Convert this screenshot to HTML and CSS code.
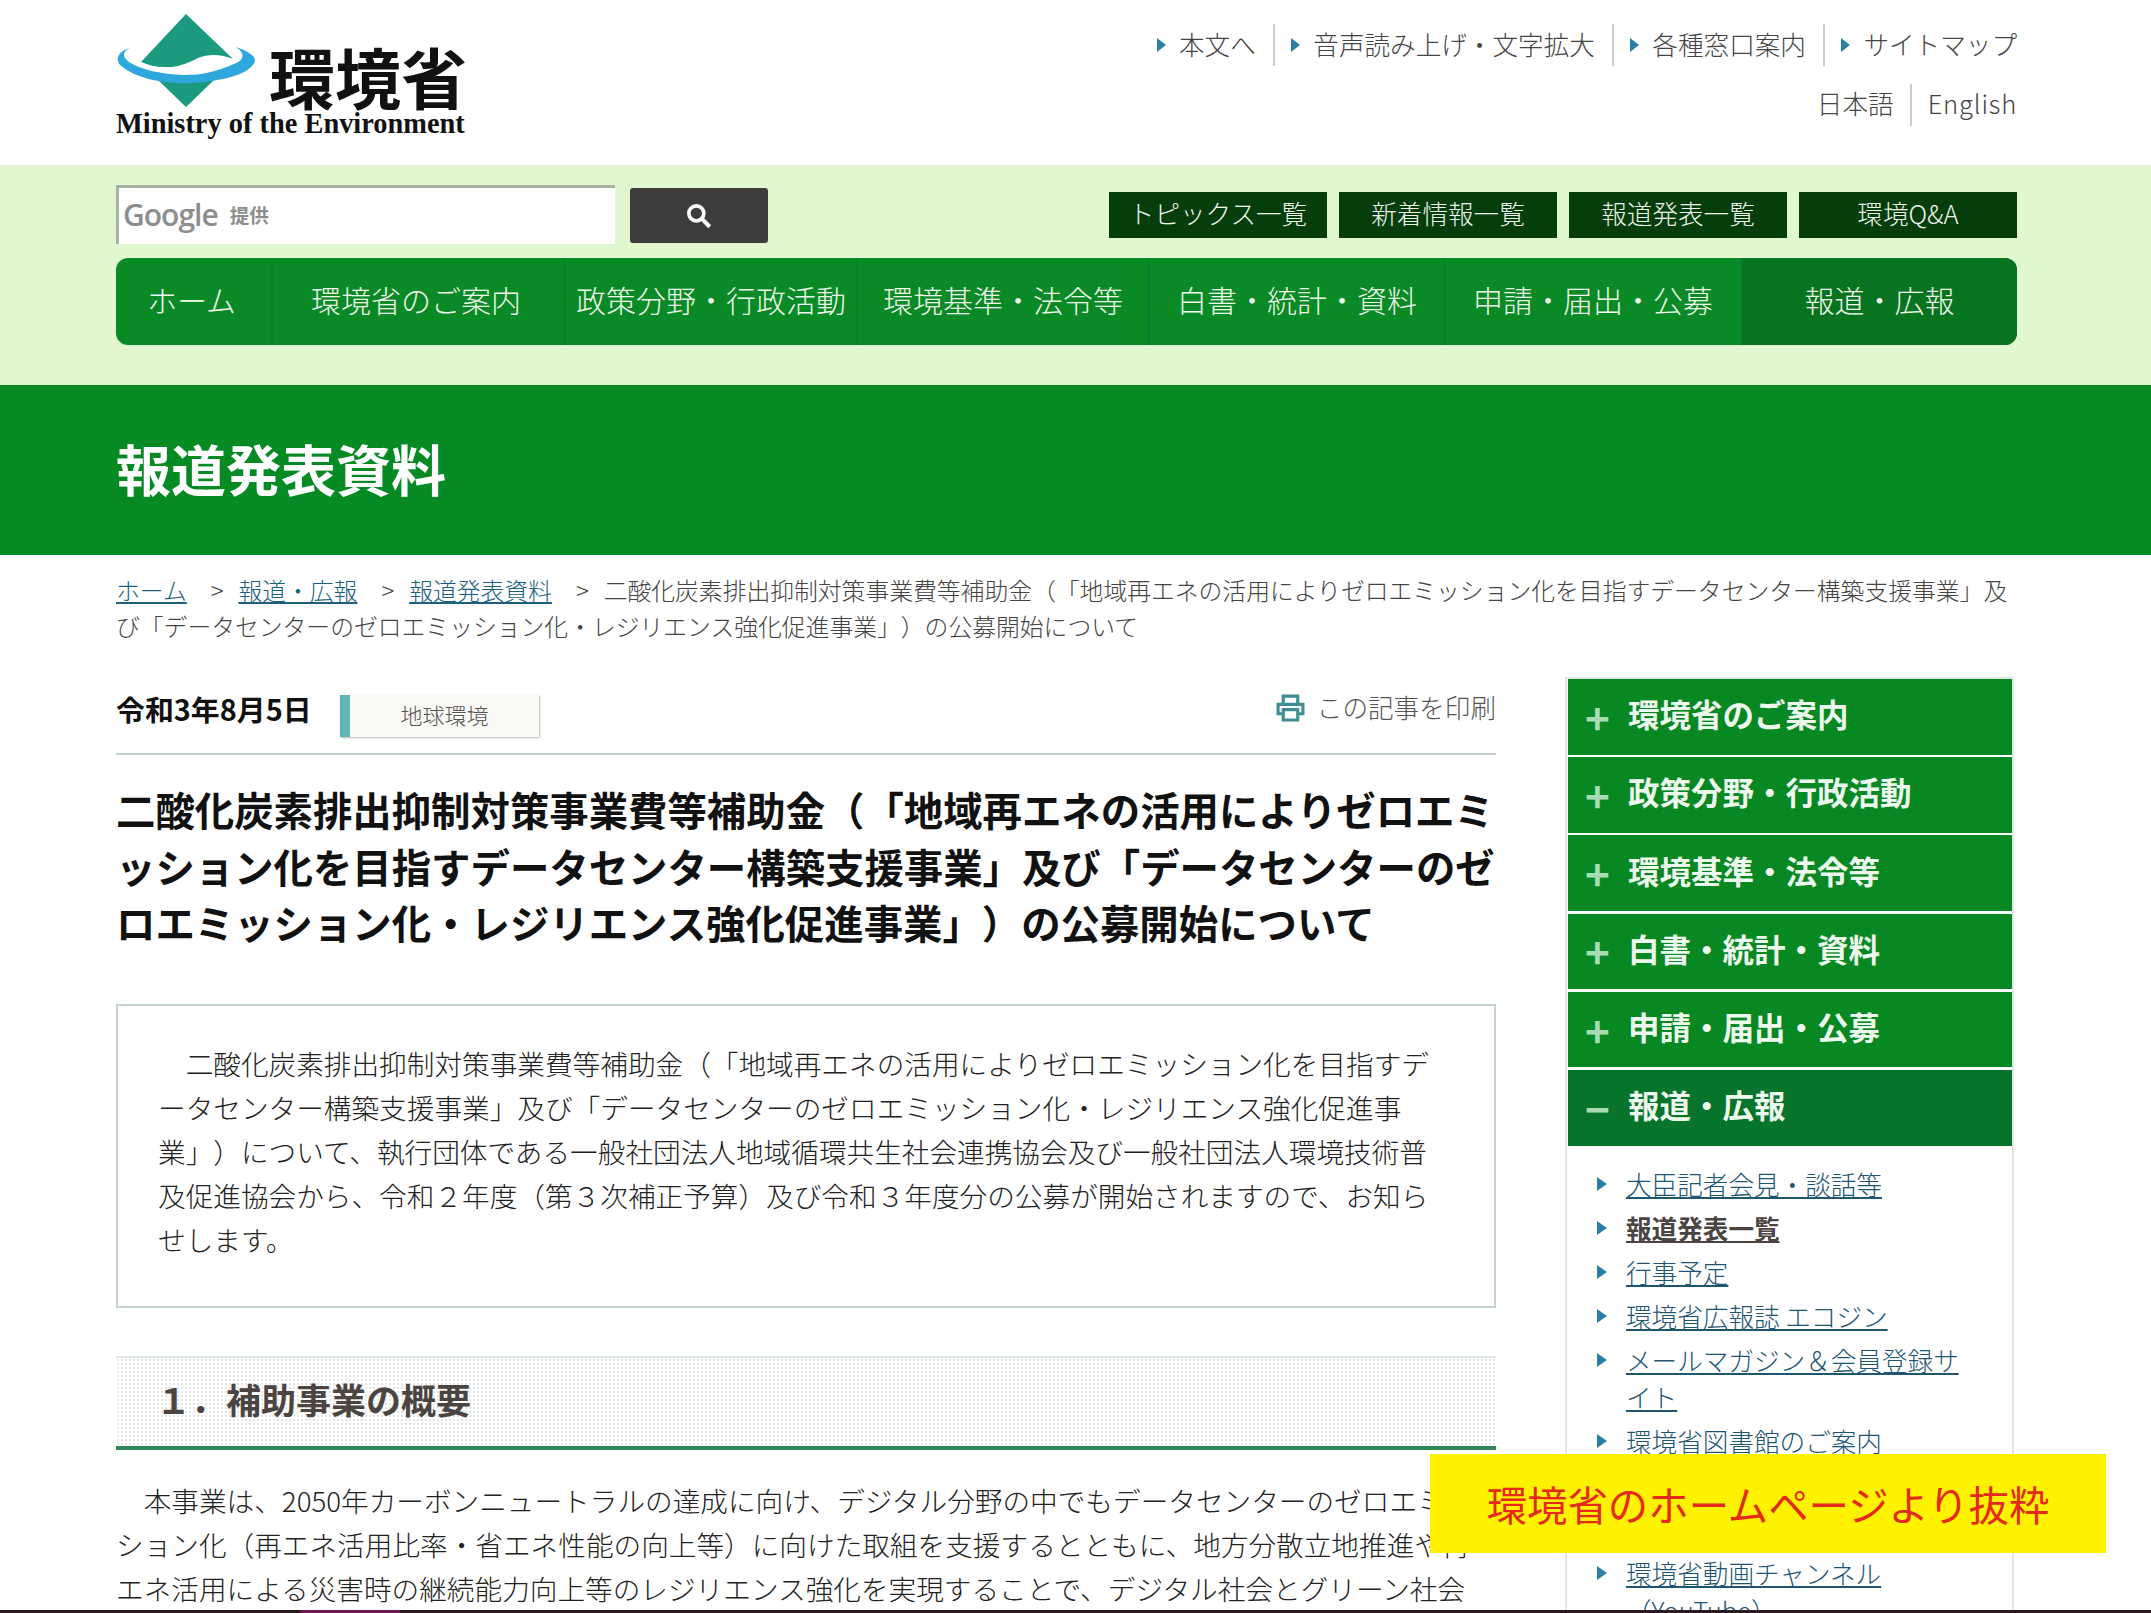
FILE: index.html
```html
<!DOCTYPE html>
<html lang="ja">
<head>
    <meta charset="UTF-8">
    <title>報道発表資料 | 環境省</title>
    <link rel="stylesheet" href="styles.css">
</head>
<body>
    <!-- ヘッダー -->
    <header class="site-head wrap">
        <div class="logo">
            <div class="logo-top">
                <svg class="logo-mark" viewBox="0 0 140 94" width="140" height="94">
                    <path fill="#1b9a80" d="M70 0 L117 45 C105 40 92 40 82 44 C70 50 60 54 48 53 C40 53 32 51 25 48 Z"/>
                    <path fill="#1b9a80" d="M40 64 L70 93 L100 64 C90 68 55 70 40 64 Z"/>
                    <path fill="#2ea7dc" d="M14 34 C0 38 -2 48 8 54 C24 66 54 70 72 69 C100 68 128 62 136 52 C142 46 140 40 120 33 C130 40 128 46 118 50 C100 58 85 61 68 61 C45 60 25 56 13 48 C6 43 6 38 14 34 Z"/>
                </svg>
                <span class="logo-ja">環境省</span>
            </div>
            <div class="logo-en">Ministry of the Environment</div>
        </div>
        <div class="head-links">
            <ul class="util-nav">
                <li class="arrow">本文へ</li>
                <li class="arrow">音声読み上げ・文字拡大</li>
                <li class="arrow">各種窓口案内</li>
                <li class="arrow">サイトマップ</li>
            </ul>
            <ul class="util-nav lang-nav">
                <li>日本語</li>
                <li class="lang-en">English</li>
            </ul>
        </div>
    </header>

    <!-- 検索とグローバルナビ -->
    <div class="nav-band">
        <div class="wrap">
            <div class="search-row">
                <div class="search-box"><span class="google">Google</span><span class="google-sub">提供</span></div>
                <button class="search-btn">
                    <svg viewBox="0 0 28 28" width="30" height="30">
                        <circle cx="11.5" cy="11.5" r="7" fill="none" stroke="#fff" stroke-width="3.4"/>
                        <path d="M16.5 16.5 L24 24" stroke="#fff" stroke-width="3.8"/>
                    </svg>
                </button>
                <div class="quick-links">
                    <a>トピックス一覧</a>
                    <a>新着情報一覧</a>
                    <a>報道発表一覧</a>
                    <a>環境Q&amp;A</a>
                </div>
            </div>
            <nav class="global-nav">
                <a class="nav-home">ホーム</a>
                <a class="nav-about">環境省のご案内</a>
                <a>政策分野・行政活動</a>
                <a>環境基準・法令等</a>
                <a>白書・統計・資料</a>
                <a>申請・届出・公募</a>
                <a class="nav-current">報道・広報</a>
            </nav>
        </div>
    </div>

    <div class="title-band">
        <div class="wrap">報道発表資料</div>
    </div>

    <!-- パンくず -->
    <div class="breadcrumb wrap">
        <a>ホーム</a><span class="sep">&gt;</span><a>報道・広報</a><span class="sep">&gt;</span><a>報道発表資料</a><span class="sep">&gt;</span>二酸化炭素排出抑制対策事業費等補助金（「地域再エネの活用によりゼロエミッション化を目指すデータセンター構築支援事業」及び「データセンターのゼロエミッション化・レジリエンス強化促進事業」）の公募開始について
    </div>

    <div class="columns wrap">
        <main class="article">
            <div class="meta">
                <span class="date">令和3年8月5日</span>
                <span class="tag">地球環境</span>
                <span class="print">
                    <svg viewBox="0 0 28 28" width="29" height="29">
                        <path d="M7 11 V3 H21 V11 M7 20 H2 V11 H26 V20 H21 M7 16 H21 V26 H7 Z" fill="none" stroke="#3f8c92" stroke-width="3"/>
                    </svg>
                    この記事を印刷
                </span>
            </div>
            <h1>二酸化炭素排出抑制対策事業費等補助金（「地域再エネの活用によりゼロエミッション化を目指すデータセンター構築支援事業」及び「データセンターのゼロエミッション化・レジリエンス強化促進事業」）の公募開始について</h1>
            <div class="summary">
                <p>二酸化炭素排出抑制対策事業費等補助金（「地域再エネの活用によりゼロエミッション化を目指すデータセンター構築支援事業」及び「データセンターのゼロエミッション化・レジリエンス強化促進事業」）について、執行団体である一般社団法人地域循環共生社会連携協会及び一般社団法人環境技術普及促進協会から、令和２年度（第３次補正予算）及び令和３年度分の公募が開始されますので、お知らせします。</p>
            </div>
            <h2>１．補助事業の概要</h2>
            <p class="body-text">本事業は、2050年カーボンニュートラルの達成に向け、デジタル分野の中でもデータセンターのゼロエミッション化（再エネ活用比率・省エネ性能の向上等）に向けた取組を支援するとともに、地方分散立地推進や再エネ活用による災害時の継続能力向上等のレジリエンス強化を実現することで、デジタル社会とグリーン社会</p>
        </main>

        <aside class="side">
            <a class="side-item">環境省のご案内</a>
            <a class="side-item">政策分野・行政活動</a>
            <a class="side-item">環境基準・法令等</a>
            <a class="side-item">白書・統計・資料</a>
            <a class="side-item">申請・届出・公募</a>
            <a class="side-item open">報道・広報</a>
            <ul class="side-list">
                <li><a>大臣記者会見・談話等</a></li>
                <li><a class="here">報道発表一覧</a></li>
                <li><a>行事予定</a></li>
                <li><a>環境省広報誌 エコジン</a></li>
                <li><a>メールマガジン＆会員登録サイト</a></li>
                <li><a>環境省図書館のご案内</a></li>
                <li><a>環境省職員採用情報</a></li>
                <li><a>環境省フォトギャラリー</a></li>
                <li><a>環境省動画チャンネル（YouTube）</a></li>
            </ul>
        </aside>
    </div>

    <!-- 上に重ねた注記 -->
    <div class="note">環境省のホームページより抜粋</div>
    <div class="bottom-edge"></div>
</body>
</html>
```

FILE: styles.css
```css
* {
    margin: 0;
    padding: 0;
    box-sizing: border-box;
}

html, body {
    height: 1613px;
    overflow: hidden;
}

body {
    position: relative;
    background: #fff;
    color: #222;
    font-family: "Noto Sans CJK JP", "Noto Sans", sans-serif;
    font-weight: 300;
    line-break: loose;
    text-spacing-trim: space-all;
}

ul {
    list-style: none;
}

.wrap {
    width: 1901px;
    margin-left: 116px;
}

/* ヘッダー */
.site-head {
    display: flex;
    justify-content: space-between;
    height: 165px;
}

.logo {
    padding-top: 14px;
}

.logo-top {
    display: flex;
    height: 94px;
}

.logo-ja {
    margin: 26px 0 0 13px;
    font-size: 66px;
    line-height: 70px;
    font-weight: 700;
    color: #111;
}

.logo-en {
    margin-top: 1px;
    font-family: "Liberation Serif", serif;
    font-size: 28.4px;
    line-height: 30px;
    font-weight: 700;
    color: #111;
    white-space: nowrap;
}

.head-links {
    display: flex;
    flex-direction: column;
    align-items: flex-end;
    gap: 18px;
    padding-top: 24px;
}

.util-nav {
    display: flex;
    height: 42px;
    font-size: 25.6px;
    line-height: 38px;
    color: #444;
}

.util-nav li {
    padding: 0 0 0 16px;
    margin-left: 16px;
    border-left: 2px solid #ccc;
}

.util-nav li:first-child {
    border-left: none;
}

.util-nav .arrow {
    display: flex;
    align-items: center;
    gap: 13px;
    padding: 0 0 3px 16.5px;
    margin-left: 17px;
}

.arrow::before {
    content: "";
    margin-top: 3px;
    border-left: 9px solid #2a7fa5;
    border-top: 7px solid transparent;
    border-bottom: 7px solid transparent;
}

.lang-en {
    letter-spacing: 0.8px;
}

/* ナビ帯 */
.nav-band {
    height: 220px;
    padding-top: 20px;
    background: #e1f7d0;
}

.search-row {
    display: flex;
    align-items: flex-start;
    height: 73px;
}

.search-box {
    display: flex;
    align-items: center;
    gap: 12px;
    width: 499px;
    height: 59px;
    padding: 0 0 4px 4px;
    background: #fff;
    border-top: 3px solid #a9b0a6;
    border-left: 3px solid #a9b0a6;
    color: #8d8d8d;
}

.google {
    font-family: "Open Sans", sans-serif;
    font-size: 30px;
    font-weight: 600;
    letter-spacing: -1px;
}

.google-sub {
    font-size: 19.5px;
    font-weight: 700;
}

.search-btn {
    display: flex;
    align-items: center;
    justify-content: center;
    width: 138px;
    height: 55px;
    margin: 3px 0 0 15px;
    background: #3d3d3d;
    border: none;
    border-radius: 3px;
}

.quick-links {
    display: flex;
    gap: 12px;
    margin: 7px 0 0 auto;
}

.quick-links a {
    width: 218px;
    height: 46px;
    background: #053e0b;
    color: #f0f5ee;
    font-size: 25.6px;
    line-height: 42px;
    text-align: center;
}

.global-nav {
    display: grid;
    grid-template-columns: 155px 293px 292px 292px 296px 296px 277px;
    height: 87px;
    background: #0a8a26;
    border-radius: 12px;
    overflow: hidden;
}

.global-nav a {
    border-left: 2px solid #0b8030;
    color: #eef7ea;
    font-size: 30px;
    line-height: 82px;
    text-align: center;
    white-space: nowrap;
}

.global-nav .nav-home {
    padding-right: 4px;
    border-left: none;
}

.global-nav .nav-about {
    padding-right: 5px;
}

.global-nav .nav-current {
    background: #09741f;
}

.title-band {
    height: 170px;
    background: #068a23;
    color: #fff;
    font-size: 55px;
    font-weight: 700;
    line-height: 165px;
}

/* パンくず */
.breadcrumb {
    height: 123px;
    padding-top: 17px;
    font-size: 23.8px;
    line-height: 36px;
    color: #444;
}

.breadcrumb a {
    color: #1d5f80;
    text-decoration: underline;
}

.sep {
    margin: 0 15px 0 24px;
}

/* 本文 */
.columns {
    display: flex;
    gap: 69px;
    align-items: flex-start;
}

.article {
    width: 1380px;
    flex-shrink: 0;
}

.meta {
    display: flex;
    align-items: flex-start;
    height: 77px;
    padding-top: 17px;
    border-bottom: 2px solid #bfcfcf;
}

.date {
    width: 224px;
    font-size: 28.9px;
    font-weight: 700;
    line-height: 26px;
    color: #111;
    white-space: nowrap;
}

.tag {
    width: 199px;
    height: 42px;
    background: #f9f9f6;
    border-left: 10px solid #5fb6b2;
    box-shadow: 1px 1px 2px #bbb;
    font-size: 22px;
    line-height: 38px;
    text-align: center;
    color: #555;
}

.print {
    display: flex;
    align-items: center;
    gap: 12px;
    margin: -5px 0 0 auto;
    font-size: 25.6px;
    line-height: 34px;
    color: #555;
}

h1 {
    margin: 26px 0 53px;
    font-size: 39.4px;
    line-height: 56.5px;
    font-weight: 700;
    color: #111;
}

.summary {
    padding: 35px 40px 45px;
    border: 2px solid #c5d2d2;
    font-size: 27.65px;
    line-height: 44px;
}

.summary p, .body-text {
    text-indent: 1em;
}

h2 {
    margin-top: 48px;
    height: 94px;
    padding-left: 40px;
    background-color: #fff;
    background-image: radial-gradient(#e4e8e6 1px, transparent 1.2px);
    background-size: 4px 4px;
    border-top: 2px solid #dfe8e4;
    border-bottom: 4px solid #2f875a;
    font-size: 35px;
    font-weight: 700;
    line-height: 82px;
    color: #4b4441;
}

.body-text {
    margin-top: 28px;
    font-size: 27.65px;
    line-height: 44px;
}

/* サイドメニュー */
.side {
    width: 449px;
    margin-top: -1px;
    border: 2px solid #e3e8e6;
    border-bottom: none;
    font-size: 25.6px;
}

.side-item {
    display: flex;
    align-items: center;
    gap: 19px;
    height: 75.6px;
    margin: 0 0 2.6px 1px;
    width: 444px;
    padding: 0 0 7px 17px;
    background: #078823;
    color: #eef9ee;
    font-size: 31.5px;
    font-weight: 700;
}

.side-item::before {
    content: "+";
    width: 24px;
    margin-top: 7px;
    font-size: 42px;
    font-weight: 700;
    line-height: 1;
    text-align: center;
    color: #a8dcb4;
}

.side-item.open {
    margin-bottom: 0;
    background: #06742a;
}

.side-item.open::before {
    content: "−";
}

.side-list {
    padding: 19px 0 0 30px;
}

.side-list li {
    display: flex;
    gap: 19px;
    width: 382px;
    margin-bottom: 7px;
    line-height: 37px;
}

.side-list li::before {
    content: "";
    flex-shrink: 0;
    margin-top: 12px;
    height: 0;
    border-left: 10px solid #2a7fa5;
    border-top: 7px solid transparent;
    border-bottom: 7px solid transparent;
}

.side-list a {
    color: #1d5573;
    text-decoration: underline;
}

.side-list .here {
    color: #4b4441;
    font-weight: 700;
}

/* 重ねた注記 */
.note {
    position: absolute;
    left: 1430px;
    top: 1454px;
    width: 676px;
    height: 99px;
    background: #fff200;
    color: #e52a1c;
    font-size: 40.4px;
    font-weight: 400;
    line-height: 99px;
    text-align: center;
}

.bottom-edge {
    position: absolute;
    left: 0;
    bottom: 0;
    width: 100%;
    height: 3px;
    background: linear-gradient(90deg, #2a1a20 300px, #6a1a50 300px, #6a1a50 400px, #2a1a20 400px);
}
```
